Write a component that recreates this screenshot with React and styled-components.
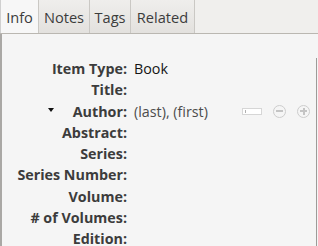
import React from 'react'
import styled, { createGlobalStyle } from 'styled-components'

const GlobalStyle = createGlobalStyle`
  html, body { margin: 0; padding: 0; background: #f5f5f5; }
  body { font-family: "Open Sans", "DejaVu Sans", sans-serif; }
`

const fields = [
  { label: 'Item Type:', value: 'Book' },
  { label: 'Title:' },
  { label: 'Author:', creator: true },
  { label: 'Abstract:' },
  { label: 'Series:' },
  { label: 'Series Number:' },
  { label: 'Volume:' },
  { label: '# of Volumes:' },
  { label: 'Edition:' },
]

const tabs = [
  { name: 'Info', width: 38 },
  { name: 'Notes', width: 50 },
  { name: 'Tags', width: 40 },
  { name: 'Related', width: 63 },
]

function App() {
  return (
    <Window>
      <GlobalStyle />
      <TabBar>
        {tabs.map((t, i) => (
          <Tab key={t.name} $active={i === 0} $width={t.width}>{t.name}</Tab>
        ))}
      </TabBar>
      <Body>
        <Pane>
          <FieldGrid>
            {fields.map(f => (
              <React.Fragment key={f.label}>
                <Label>
                  {f.creator && <Twisty />}
                  {f.label}
                </Label>
                <Value>
                  {f.value}
                  {f.creator && (
                    <>
                      <CreatorName>(last), (first)</CreatorName>
                      <Controls>
                        <SwitchBox><Caret /></SwitchBox>
                        <CircleButton><Sign /></CircleButton>
                        <CircleButton><Sign $plus /></CircleButton>
                      </Controls>
                    </>
                  )}
                </Value>
              </React.Fragment>
            ))}
          </FieldGrid>
        </Pane>
        <ScrollEdge />
      </Body>
    </Window>
  )
}

const Window = styled.div`
  width: 318px;
  height: 246px;
  display: flex;
  flex-direction: column;
  overflow: hidden;
`
const TabBar = styled.div`
  display: flex;
  height: 33px;
  flex-shrink: 0;
  background: #f0efed;
  border-bottom: 1px solid #bab7b1;
`
const Tab = styled.div`
  box-sizing: border-box;
  width: ${p => p.$width + 1}px;
  display: flex;
  align-items: center;
  justify-content: center;
  padding-top: 1px;
  font-size: 14.6px;
  color: #3c3c3c;
  background: ${p => (p.$active ? '#f7f7f7' : 'linear-gradient(#efeeec, #e3e1de)')};
  border-right: 1px solid #cac8c4;
  border-left: ${p => (p.$active ? '1px solid #d0d0d0' : 'none')};
`
const Body = styled.div`
  flex: 1;
  display: flex;
  background: #f5f5f5;
  border-left: 2px solid #aaa8a5;
`
const Pane = styled.div`
  flex: 1;
  padding-top: 24px;
`
const ScrollEdge = styled.div`
  width: 1px;
  margin: 24px 1px 0 0;
  background: #9d9b98;
`
const FieldGrid = styled.div`
  display: grid;
  grid-template-columns: 125px 1fr;
  grid-auto-rows: 21.25px;
  column-gap: 7px;
`
const Label = styled.div`
  display: flex;
  align-items: center;
  justify-content: flex-end;
  font-size: 14.3px;
  font-weight: 700;
  color: #3c3c3c;
  white-space: nowrap;
`
const Twisty = styled.span`
  width: 0;
  height: 0;
  border-left: 3.5px solid transparent;
  border-right: 3.5px solid transparent;
  border-top: 4px solid #111;
  margin-right: 19px;
  margin-top: -3px;
`
const Value = styled.div`
  display: flex;
  align-items: center;
  font-size: 14.3px;
  color: #141414;
  white-space: nowrap;
`
const CreatorName = styled.span`
  color: #4c4c4c;
`
const Controls = styled.div`
  display: flex;
  align-items: center;
  margin-left: auto;
  margin-right: 6px;
  gap: 11px;
`
const SwitchBox = styled.span`
  box-sizing: border-box;
  width: 20px;
  height: 7px;
  border: 1px solid #d6d6d6;
  background: #fff;
  display: flex;
  align-items: center;
  padding-left: 2px;
`
const Caret = styled.span`
  width: 1px;
  height: 3px;
  background: #b0b0b0;
`
const CircleButton = styled.span`
  box-sizing: border-box;
  width: 13px;
  height: 13px;
  border-radius: 50%;
  border: 1px solid #cdcdcd;
  display: flex;
  align-items: center;
  justify-content: center;
`
const Sign = styled.span`
  width: 7px;
  height: 2px;
  background: #c4c4c4;
  position: relative;
  &::after {
    content: '';
    display: ${p => (p.$plus ? 'block' : 'none')};
    position: absolute;
    left: 2.5px;
    top: -2.5px;
    width: 2px;
    height: 7px;
    background: #c4c4c4;
  }
`

export default App
